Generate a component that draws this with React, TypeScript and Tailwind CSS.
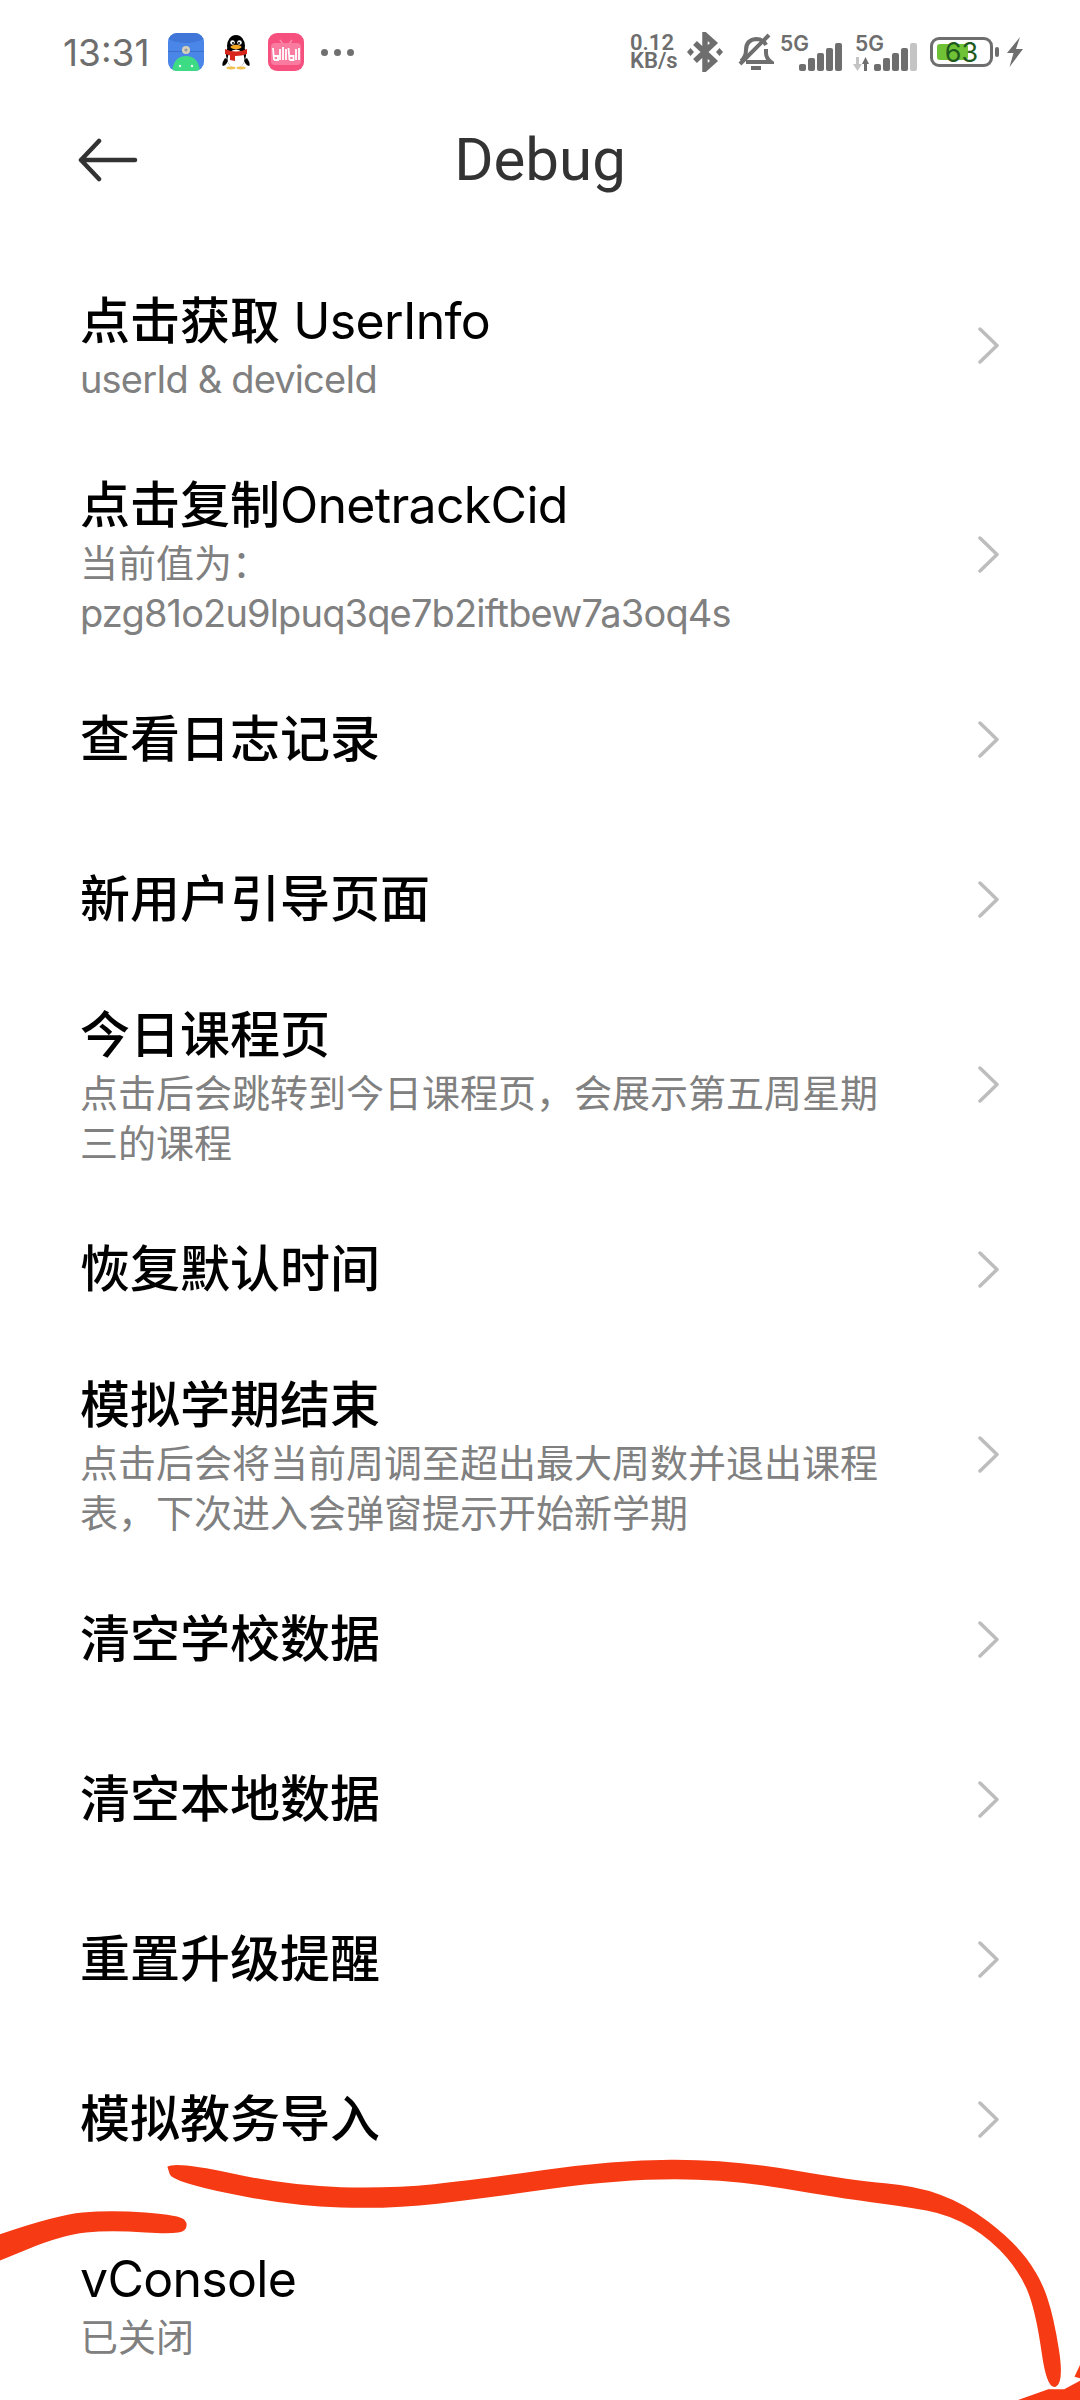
type Item = {
  title: string;
  sub?: string[];
  noArrow?: boolean;
  className?: string;
};

const items: Item[] = [
  { title: "点击获取 UserInfo", sub: ["userId & deviceId"], className: "mb-[24px]" },
  { title: "点击复制OnetrackCid", sub: ["当前值为：", "pzg81o2u9lpuq3qe7b2iftbew7a3oq4s"] },
  { title: "查看日志记录" },
  { title: "新用户引导页面" },
  { title: "今日课程页", sub: ["点击后会跳转到今日课程页，会展示第五周星期", "三的课程"] },
  { title: "恢复默认时间" },
  { title: "模拟学期结束", sub: ["点击后会将当前周调至超出最大周数并退出课程", "表，下次进入会弹窗提示开始新学期"] },
  { title: "清空学校数据" },
  { title: "清空本地数据" },
  { title: "重置升级提醒" },
  { title: "模拟教务导入" },
  { title: "vConsole", sub: ["已关闭"], noArrow: true, className: "mt-[24px]" },
];

function smooth(points: number[][]) {
  let d = `M${points[0][0]} ${points[0][1]}`;
  for (let i = 1; i < points.length - 1; i++) {
    const [x, y] = points[i];
    const mx = (x + points[i + 1][0]) / 2;
    const my = (y + points[i + 1][1]) / 2;
    d += ` Q${x} ${y} ${mx} ${my}`;
  }
  const last = points[points.length - 1];
  return d + ` L${last[0]} ${last[1]}`;
}

const longStroke = [
  [243, 200], [255, 183], [420, 258], [570, 265], [690, 240], [890, 180], [1060, 178], [1240, 242],
  [1330, 258], [1400, 310], [1470, 420], [1510, 530], [1530, 650], [1545, 850],
  [1520, 870], [1505, 650], [1485, 530], [1440, 420], [1380, 345], [1310, 318], [1220, 295],
  [1060, 238], [900, 238], [700, 295], [570, 327], [420, 318], [250, 245], [243, 200],
];
const shortStroke = [
  [-10, 410], [80, 345], [160, 330], [262, 345], [274, 375], [262, 405], [160, 390], [90, 405], [-10, 490],
];

function RedMarks() {
  return (
    <svg
      className="absolute left-0 top-[2100px] w-[1080px] h-[300px]"
      viewBox="0 0 1568 900"
      preserveAspectRatio="none"
      fill="#f63a13"
    >
      <path d={smooth(longStroke) + " Z"} />
      <path d={smooth(shortStroke) + " Z"} />
      <path d="M1478 900 L1522 868 L1545 868 L1568 842 L1568 900 Z" />
      <path d="M1568 795 L1560 830 L1568 835 Z" />
    </svg>
  );
}

function AppIcons() {
  return (
    <div className="flex items-center ml-[19px]">
      <svg width="36" height="38" viewBox="0 0 36 38">
        <defs>
          <clipPath id="fileClip">
            <rect width="36" height="38" rx="9" />
          </clipPath>
        </defs>
        <g clipPath="url(#fileClip)">
          <rect width="36" height="38" fill="#4a86e8" />
          <path d="M0 0H36V6Q18 14 0 6Z" fill="#3f76d8" />
          <rect y="18" width="36" height="1" fill="#3b6fc8" />
          <path d="M4 38Q6 23 18 23T32 38Z" fill="#3ddc84" />
          <circle cx="18" cy="17" r="4" fill="#d8d2b8" />
          <circle cx="18" cy="17" r="1.6" fill="#8d9aa8" />
          <circle cx="12" cy="33" r="1.2" fill="#e8fff2" />
          <circle cx="24" cy="33" r="1.2" fill="#e8fff2" />
        </g>
      </svg>
      <svg width="28" height="36" viewBox="0 0 28 36" className="ml-[18px]">
        <ellipse cx="14" cy="21" rx="10" ry="13" fill="#000" />
        <ellipse cx="14" cy="12" rx="9" ry="11" fill="#000" />
        <path d="M3 24 Q-1 30 1 32 Q5 31 6 26Z" fill="#000" />
        <path d="M25 24 Q29 30 27 32 Q23 31 22 26Z" fill="#000" />
        <ellipse cx="14" cy="25" rx="8.5" ry="9.5" fill="#fff" />
        <circle cx="10.5" cy="8.5" r="2.3" fill="#fff" />
        <circle cx="17.5" cy="8.5" r="2.3" fill="#fff" />
        <circle cx="11" cy="9" r="1" fill="#000" />
        <circle cx="17" cy="9" r="1" fill="#000" />
        <ellipse cx="14" cy="13" rx="5.5" ry="2.2" fill="#f5a623" />
        <path d="M3 15 Q14 20 25 15 L25 20 Q14 24 3 20Z" fill="#d9261c" />
        <path d="M8 20 L13 21 L13 27 L8 26Z" fill="#d9261c" />
        <ellipse cx="9" cy="34" rx="4.5" ry="1.4" fill="#f2c14e" />
        <ellipse cx="19" cy="34" rx="4.5" ry="1.4" fill="#f2c14e" />
      </svg>
      <svg width="36" height="38" viewBox="0 0 36 38" className="ml-[18px]">
        <rect width="36" height="38" rx="9" fill="#f6507f" />
        <path d="M12 7 L15 11 M24 7 L21 11" stroke="#f98bab" strokeWidth="1.5" />
        <rect x="3" y="10" width="30" height="22" rx="4" fill="#f97ca0" />
        <path
          d="M5 15 L6 27 M6 23 H10 V27 H6 M12 16 V27 M15 14 V27 M18 16 V27 M20.5 15 L21.5 27 M21.5 23 H25.5 V27 H21.5 M28 16 V27 M31 15 V27"
          stroke="#fff"
          strokeWidth="1.8"
          fill="none"
        />
      </svg>
      <div className="flex gap-[6px] ml-[17px]">
        <span className="w-[7px] h-[7px] rounded-full bg-[#707070]" />
        <span className="w-[7px] h-[7px] rounded-full bg-[#707070]" />
        <span className="w-[7px] h-[7px] rounded-full bg-[#707070]" />
      </div>
    </div>
  );
}

function Signal({ dim }: { dim?: boolean }) {
  const heights = [7, 13, 18, 23, 28];
  return (
    <div className="flex items-end gap-[2px] h-[28px]">
      {heights.map((h, i) => (
        <span
          key={i}
          className={
            dim && i === 4
              ? "w-[7px] rounded-[2px] bg-[#c4c4c4]"
              : "w-[7px] rounded-[2px] bg-[#6e6e6e]"
          }
          style={{ height: h }}
        />
      ))}
    </div>
  );
}

function StatusRight() {
  return (
    <div className="flex items-center mr-[56px] text-[#6e6e6e]">
      <div className="flex flex-col font-semibold text-[22px] leading-[18px] w-[50px] font-['Roboto',sans-serif]">
        <span>0.12</span>
        <span>KB/s</span>
      </div>
      <svg width="36" height="40" viewBox="0 0 36 40" className="ml-[7px]" fill="none" stroke="#6e6e6e" strokeWidth="5.5">
        <path d="M8 11 L27 29 L18 37 V3 L27 11 L8 29" />
        <path d="M3.5 16 L7 20 L3.5 24 L0 20Z M32.5 16 L36 20 L32.5 24 L29 20Z" fill="#6e6e6e" stroke="none" />
      </svg>
      <svg width="36" height="38" viewBox="0 0 36 38" className="ml-[15px]" fill="none" stroke="#6e6e6e" strokeWidth="4">
        <path d="M3 28 Q8 24 8 17 Q8 7 18 6 Q25 6 28 12" />
        <path d="M28 16 V20 Q28 25 33 29 H8" />
        <path d="M2 31 L31 2" />
        <path d="M13 35 H23" />
      </svg>
      <div className="relative w-[62px] h-[34px] ml-[6px]">
        <span className="absolute left-0 top-[-2px] text-[21px] leading-[22px] font-semibold">5G</span>
        <div className="absolute right-0 bottom-[-2px]">
          <Signal />
        </div>
      </div>
      <div className="relative w-[64px] h-[34px] ml-[11px]">
        <span className="absolute left-[2px] top-[-2px] text-[21px] leading-[22px] font-semibold">5G</span>
        <svg width="16" height="14" viewBox="0 0 16 14" className="absolute left-0 bottom-[-2px]">
          <path d="M3 0 H6 V7 H9 L4.5 14 L0 7 H3Z" fill="#c4c4c4" />
          <path d="M11 14 H14 V7 H16 L12.5 0 L9 7 H11Z" fill="#6e6e6e" />
        </svg>
        <div className="absolute right-0 bottom-[-2px]">
          <Signal dim />
        </div>
      </div>
      <div className="relative w-[63px] h-[30px] ml-[13px] rounded-[9px] border-[3px] border-[#6e6e6e] flex items-center justify-center">
        <span className="absolute left-[4px] top-[4px] bottom-[4px] w-[31px] rounded-[3px] bg-[#6fc236]" />
        <span className="relative text-[27px] leading-none text-[#1e5a1e]">63</span>
      </div>
      <span className="w-[4px] h-[10px] ml-[2px] rounded-full bg-[#6e6e6e]" />
      <svg width="18" height="30" viewBox="0 0 18 30" className="ml-[7px]" fill="#6e6e6e">
        <path d="M14 0 L1 16 L7.5 16 L3.5 30 L17 12 L10 12 Z" />
      </svg>
    </div>
  );
}

// latin runs sit tighter and lighter than the chinese ones in the reference
function Mixed({ text, latinClass }: { text: string; latinClass: string }) {
  return (
    <>
      {text.split(/([A-Za-z0-9& ]+)/).map((part, i) =>
        /[A-Za-z0-9]/.test(part) ? (
          <span key={i} className={latinClass}>
            {part}
          </span>
        ) : (
          <span key={i}>{part}</span>
        ),
      )}
    </>
  );
}

function Row({ item }: { item: Item }) {
  const hasSub = !!item.sub;
  return (
    <div
      className={`flex items-center justify-between pl-[80px] pr-[81px] ${
        hasSub ? "pt-[27px] pb-[21px]" : "h-[160px]"
      } ${item.className ?? ""}`}
    >
      <div className="min-w-0">
        <div className="text-[50px] leading-[58px] text-black font-medium">
          <Mixed text={item.title} latinClass="font-normal tracking-[-0.7px]" />
        </div>
        {hasSub && (
          <div className="mt-[4px] text-[38px] leading-[50px] text-[#808080]">
            {item.sub!.map((line) => (
              <div key={line}>
                <Mixed text={line} latinClass="tracking-[-0.85px]" />
              </div>
            ))}
          </div>
        )}
      </div>
      {!item.noArrow && (
        <svg
          width="21"
          height="37"
          viewBox="0 0 21 37"
          fill="none"
          stroke="#bdbdbd"
          strokeWidth="3.5"
          strokeLinecap="round"
          strokeLinejoin="round"
          className={hasSub ? "shrink-0 mb-[6px]" : "shrink-0"}
        >
          <path d="M2 2 L19 18.5 L2 35" />
        </svg>
      )}
    </div>
  );
}

export default function App() {
  return (
    <div className="relative w-[1080px] h-[2400px] overflow-hidden bg-white font-['Inter','Noto_Sans_CJK_SC',sans-serif]">
      <div className="flex items-center justify-between h-[104px]">
        <div className="flex items-center pl-[63px]">
          <span className="text-[37px] leading-none text-[#6e6e6e]">13:31</span>
          <AppIcons />
        </div>
        <StatusRight />
      </div>

      <div className="relative flex items-center justify-center h-[112px]">
        <svg
          width="60"
          height="44"
          viewBox="0 0 60 44"
          className="absolute left-[78px] top-[34px]"
          fill="none"
          stroke="#333333"
          strokeWidth="4.5"
          strokeLinecap="round"
          strokeLinejoin="round"
        >
          <path d="M57 22 H3 M21 3 L3 22 L21 41" />
        </svg>
        <h1 className="text-[60px] leading-none font-normal text-[#333333] font-['Roboto',sans-serif]">Debug</h1>
      </div>

      <div className="mt-[49px]">
        {items.map((item) => (
          <Row key={item.title} item={item} />
        ))}
      </div>

      <RedMarks />
    </div>
  );
}
